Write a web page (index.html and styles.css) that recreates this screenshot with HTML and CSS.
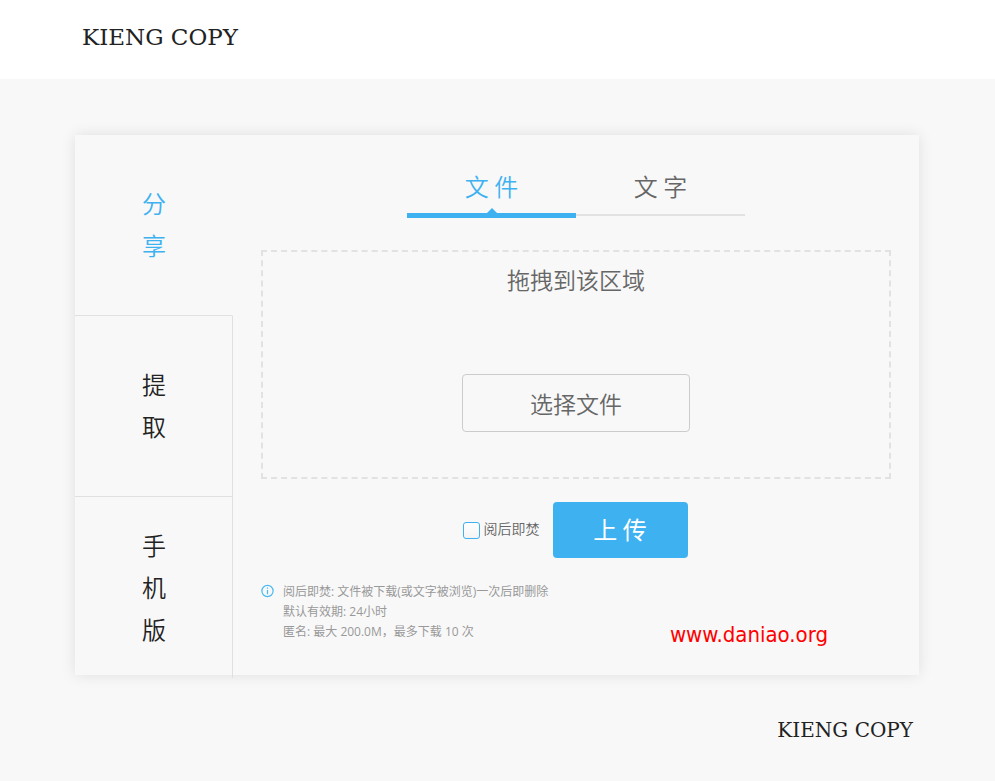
FILE: index.html
```html
<!DOCTYPE html>
<html lang="zh-CN">
<head>
    <meta charset="UTF-8">
    <meta name="viewport" content="width=device-width, initial-scale=1.0">
    <title>KIENG COPY</title>
    <link rel="stylesheet" href="styles.css">
</head>
<body>
    <header class="header">
        <a class="logo" href="#">KIENG COPY</a>
    </header>

    <main class="card">
        <nav class="side">
            <a class="side-item active" href="#share"><span>分</span><span>享</span></a>
            <a class="side-item" href="#extract"><span>提</span><span>取</span></a>
            <a class="side-item" href="#mobile"><span>手</span><span>机</span><span>版</span></a>
        </nav>

        <section class="content">
            <div class="tabs">
                <button class="tab active" type="button">文 件</button>
                <button class="tab" type="button">文 字</button>
            </div>

            <div class="drop">
                <p class="drop-text">拖拽到该区域</p>
                <button class="choose" type="button">选择文件</button>
            </div>

            <div class="actions">
                <label class="burn" for="burn">
                    <input class="burn-box" type="checkbox" id="burn">
                    <span class="burn-text">阅后即焚</span>
                </label>
                <button class="upload" type="button">上 传</button>
            </div>

            <div class="tips">
                <svg class="tips-icon" viewBox="0 0 14 14" aria-hidden="true">
                    <circle cx="6.5" cy="7" r="5.6" fill="none" stroke="#4ab9f0" stroke-width="1.2"/>
                    <path d="M6.5 6v4.3M6.5 3.6v1.2" stroke="#4ab9f0" stroke-width="1.2"/>
                </svg>
                <div class="tips-text">
                    <p>阅后即焚: 文件被下载(或文字被浏览)一次后即删除</p>
                    <p>默认有效期: 24小时</p>
                    <p>匿名: 最大 200.0M，最多下载 10 次</p>
                </div>
            </div>

            <a class="site" href="#">www.daniao.org</a>
        </section>
    </main>

    <footer class="footer">
        <a class="logo logo-small" href="#">KIENG COPY</a>
    </footer>
</body>
</html>
```

FILE: styles.css
```css
* { box-sizing: border-box; margin: 0; padding: 0; }
body { background: #f8f8f8; color: #666; font-family: "Noto Sans CJK SC", sans-serif; font-weight: 350; }
a { color: inherit; text-decoration: none; }
button { background: none; border: none; color: inherit; font-family: inherit; font-weight: inherit; cursor: pointer; }

/* header */
.header { background: #fff; padding: 22px 82px 27px; }
.logo { display: block; color: #222; font-family: "DejaVu Serif", serif; font-size: 23px; line-height: 30px; font-weight: 400; }
.logo-small { font-size: 20px; }

/* card */
.card { display: flex; margin: 56px 76px 0 75px; min-height: 540px; box-shadow: 0 0 14px rgba(0, 0, 0, 0.1); }

.side { flex: 0 0 158px; margin-bottom: -3px; }
.side-item { display: flex; flex-direction: column; align-items: center; justify-content: center; height: 181px; padding: 0 0 2px 1px; color: #222; font-size: 24px; line-height: 42px; border-right: 1px solid #e0e0e0; border-bottom: 1px solid #e0e0e0; }
.side-item.active { color: #3eb1f1; border-right-color: transparent; }
.side-item:last-child { border-bottom: none; }

.content { position: relative; flex: 1; padding: 26px 28px 32px; }

/* tabs */
.tabs { display: flex; align-items: flex-start; width: 338px; margin: 0 auto; }
.tab { position: relative; flex: 1; height: 55px; padding-bottom: 4px; font-size: 24px; border-bottom: 2px solid #e2e2e2; }
.tab.active { height: 57px; padding-bottom: 3px; color: #3eb1f1; border-bottom: 5px solid #3eb1f1; }
.tab.active::after { content: ""; position: absolute; left: 50%; bottom: 0; margin-left: -5px; border: 5px solid transparent; border-top: none; border-bottom-color: #3eb1f1; }

/* drop area */
.drop { display: flex; flex-direction: column; align-items: center; height: 229px; margin-top: 32px; padding-top: 10px; border: 2px dashed #e2e2e2; font-size: 23px; }
.drop-text { line-height: 34px; }
.choose { width: 228px; height: 58px; margin-top: 78px; border: 1px solid #ccc; border-radius: 4px; font-size: 23px; }

.actions { display: flex; align-items: center; justify-content: center; gap: 13px; margin-top: 23px; padding-right: 2px; }
.burn { display: flex; align-items: center; gap: 4px; font-size: 14px; }
.burn-box { appearance: none; width: 17px; height: 17px; background: linear-gradient(#fff, #f4f4f4); border: 1px solid #3eb1f1; border-radius: 3px; }
.burn-box:checked { background: #3eb1f1; }
.burn-text { padding-bottom: 4px; }
.upload { width: 135px; height: 56px; padding-bottom: 3px; background: #3eb1f1; border-radius: 4px; color: #fff; font-size: 24px; font-weight: 400; }

/* tips */
.tips { display: flex; gap: 8px; margin-top: 24px; color: #999; font-family: "Open Sans", "Noto Sans CJK SC", sans-serif; font-size: 12px; line-height: 20px; font-weight: 400; }
.tips-icon { width: 14px; height: 14px; margin-top: 2px; }

.site { position: absolute; right: 91px; bottom: 25px; color: #f00; font-family: "DejaVu Sans Condensed", "DejaVu Sans", sans-serif; font-size: 22px; line-height: 30px; font-weight: 400; }

/* footer */
.footer { display: flex; justify-content: flex-end; padding: 40px 82px 36px; }
```
